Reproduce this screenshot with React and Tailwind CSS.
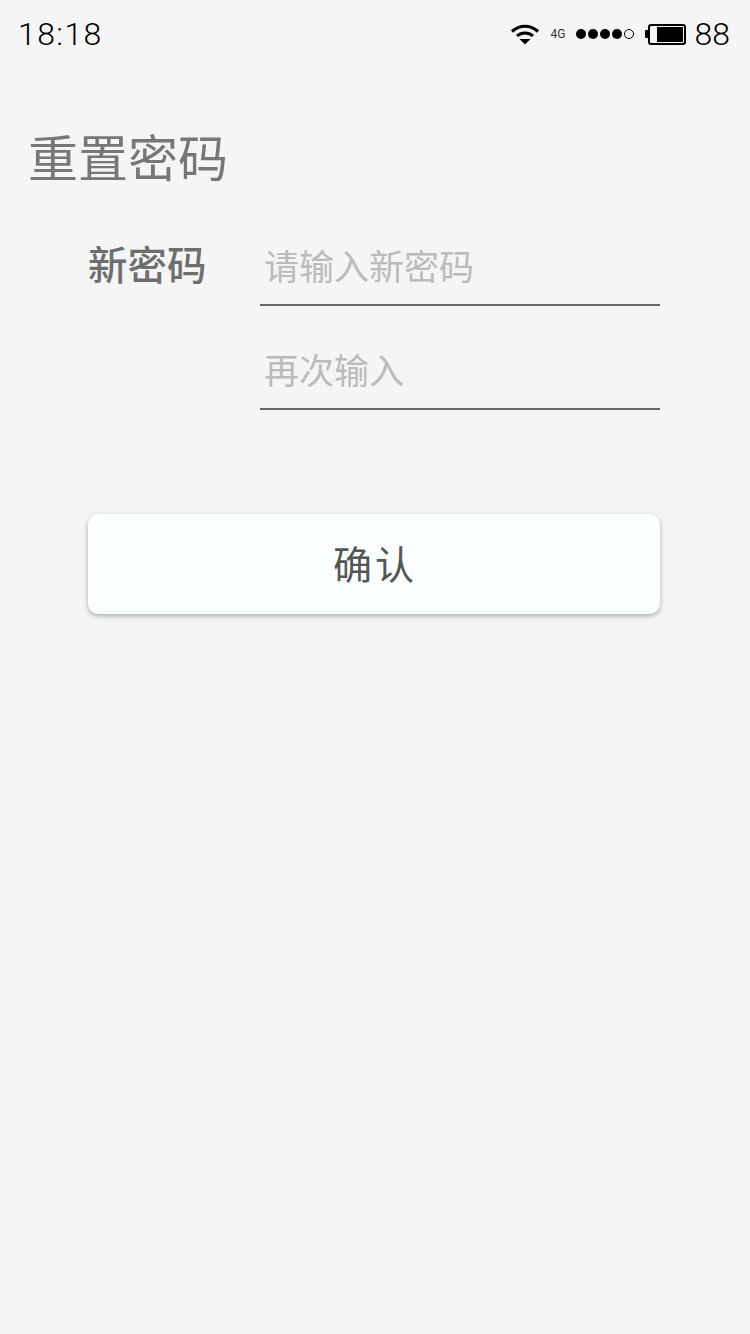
import React from "react";

const CJK = "font-['Noto_Sans_CJK_SC','Noto_Sans',sans-serif]";

function WifiIcon() {
  return (
    <svg width="30" height="22" viewBox="0 0 30 22" fill="none">
      <path d="M2 8.5 C9.5 1.5 20.5 1.5 28 8.5" stroke="#000" strokeWidth="3.2" />
      <path d="M7 13 C11.5 9 18.5 9 23 13" stroke="#000" strokeWidth="3" />
      <path d="M9.5 16 L20.5 16 L15 21.5 Z" fill="#000" />
    </svg>
  );
}

function StatusBar() {
  return (
    <div className="flex items-center justify-between h-[68px] pl-[18px] pr-[20px] font-['Roboto',sans-serif] text-black">
      <span className="text-[32px] font-light tracking-[1.4px]">18:18</span>
      <div className="flex items-center">
        <WifiIcon />
        <span className="ml-[11px] text-[12px] text-[#333] font-normal">4G</span>
        <div className="flex items-center gap-[1.5px] ml-[10px]">
          <span className="w-[10.5px] h-[10.5px] rounded-full bg-black" />
          <span className="w-[10.5px] h-[10.5px] rounded-full bg-black" />
          <span className="w-[10.5px] h-[10.5px] rounded-full bg-black" />
          <span className="w-[10.5px] h-[10.5px] rounded-full bg-black" />
          <span className="w-[10px] h-[10px] rounded-full border border-black" />
        </div>
        <div className="flex items-center ml-[11px]">
          <span className="w-[3px] h-[8px] bg-black rounded-l-[1px]" />
          <div className="w-[38px] h-[21px] border-2 border-black rounded-[3px] py-[1px] pr-[1px] flex justify-end">
            <span className="w-[26px] bg-black" />
          </div>
        </div>
        <span className="ml-[9px] text-[32px] font-light">88</span>
      </div>
    </div>
  );
}

function Field({ label, placeholder }) {
  return (
    <div className="flex h-[104px] pl-[88px] pr-[90px]">
      <span className="w-[172px] pt-[35px] text-[39.5px] leading-[52px] text-[#6e6e6e] font-medium">
        {label}
      </span>
      <div className="flex-1 h-[104px] border-b-2 border-[#666] pl-[4px] pt-[37px] text-[35px] leading-[52px] text-[#bbb]">
        {placeholder}
      </div>
    </div>
  );
}

export default function App() {
  return (
    <div className={`min-h-[1334px] bg-[#f5f5f5] ${CJK}`}>
      <StatusBar />
      <h1 className="pl-[28px] pt-[57px] text-[50px] leading-[60px] font-normal text-[#777]">
        重置密码
      </h1>
      <div className="mt-[17px]">
        <Field label="新密码" placeholder="请输入新密码" />
        <Field label="" placeholder="再次输入" />
      </div>
      <button className="block w-[572px] h-[100px] ml-[88px] mt-[104px] pb-[3px] pl-[2px] rounded-[10px] bg-[#fbffff] shadow-[0_2px_5px_rgba(0,0,0,0.3)] text-[39px] tracking-[3px] text-[#555]">
        确认
      </button>
    </div>
  );
}
